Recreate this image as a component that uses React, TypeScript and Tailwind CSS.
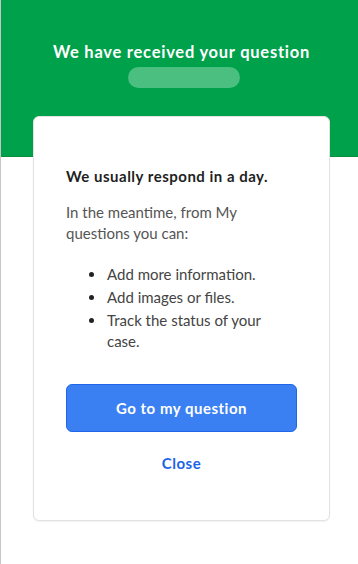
const font = { fontFamily: 'Lato, "Open Sans", sans-serif' }

const items = ['Add more information.', 'Add images or files.', 'Track the status of your case.']

export default function App() {
  return (
    <div className="flex h-[564px] w-[358px] bg-white" style={font}>
      <div className="w-px shrink-0 bg-[#c6c6c6]" />
      <div className="relative flex-1">
        {/* Header */}
        <div className="flex h-[157px] flex-col items-center border-b border-[#0a8f3f] bg-[#00a14b] pt-[42px]">
          <h1 className="ml-[4px] text-[16.5px] font-bold leading-5 tracking-[0.75px] text-white">
            We have received your question
          </h1>
          <div className="ml-[8px] mt-[5px] h-[21px] w-[112px] rounded-full bg-[#52c286] opacity-90" />
        </div>

        {/* Card */}
        <div className="absolute left-[32px] top-[116px] w-[297px] rounded-md border border-[#e2e2e2] bg-white px-[32px] pb-[45px] pt-[49px] shadow-[0_1px_2px_rgba(0,0,0,0.06)]">
          <p className="text-[15px] font-bold leading-5 tracking-[0.5px] text-[#1f1f1f]">We usually respond in a day.</p>
          <p className="mt-[16px] text-[15px] leading-[21px] text-[#555]">
            In the meantime, from My questions you can:
          </p>
          <ul className="mt-[20px] list-disc pl-[40px] text-[15px] text-[#444] marker:text-[#222]">
            {items.map((item) => (
              <li key={item} className="pl-[1px] leading-[21px] [&:not(:first-child)]:mt-[2px]">
                {item}
              </li>
            ))}
          </ul>
          <button className="mt-[32px] flex h-[48px] w-full items-center justify-center rounded-md border border-[#1f66ea] bg-[#3a80f2] text-[15px] font-bold tracking-[0.5px] text-white">
            Go to my question
          </button>
          <button className="mt-[21px] w-full text-center text-[15px] font-bold leading-5 tracking-[0.5px] text-[#1b64e8]">
            Close
          </button>
        </div>
      </div>
    </div>
  )
}
